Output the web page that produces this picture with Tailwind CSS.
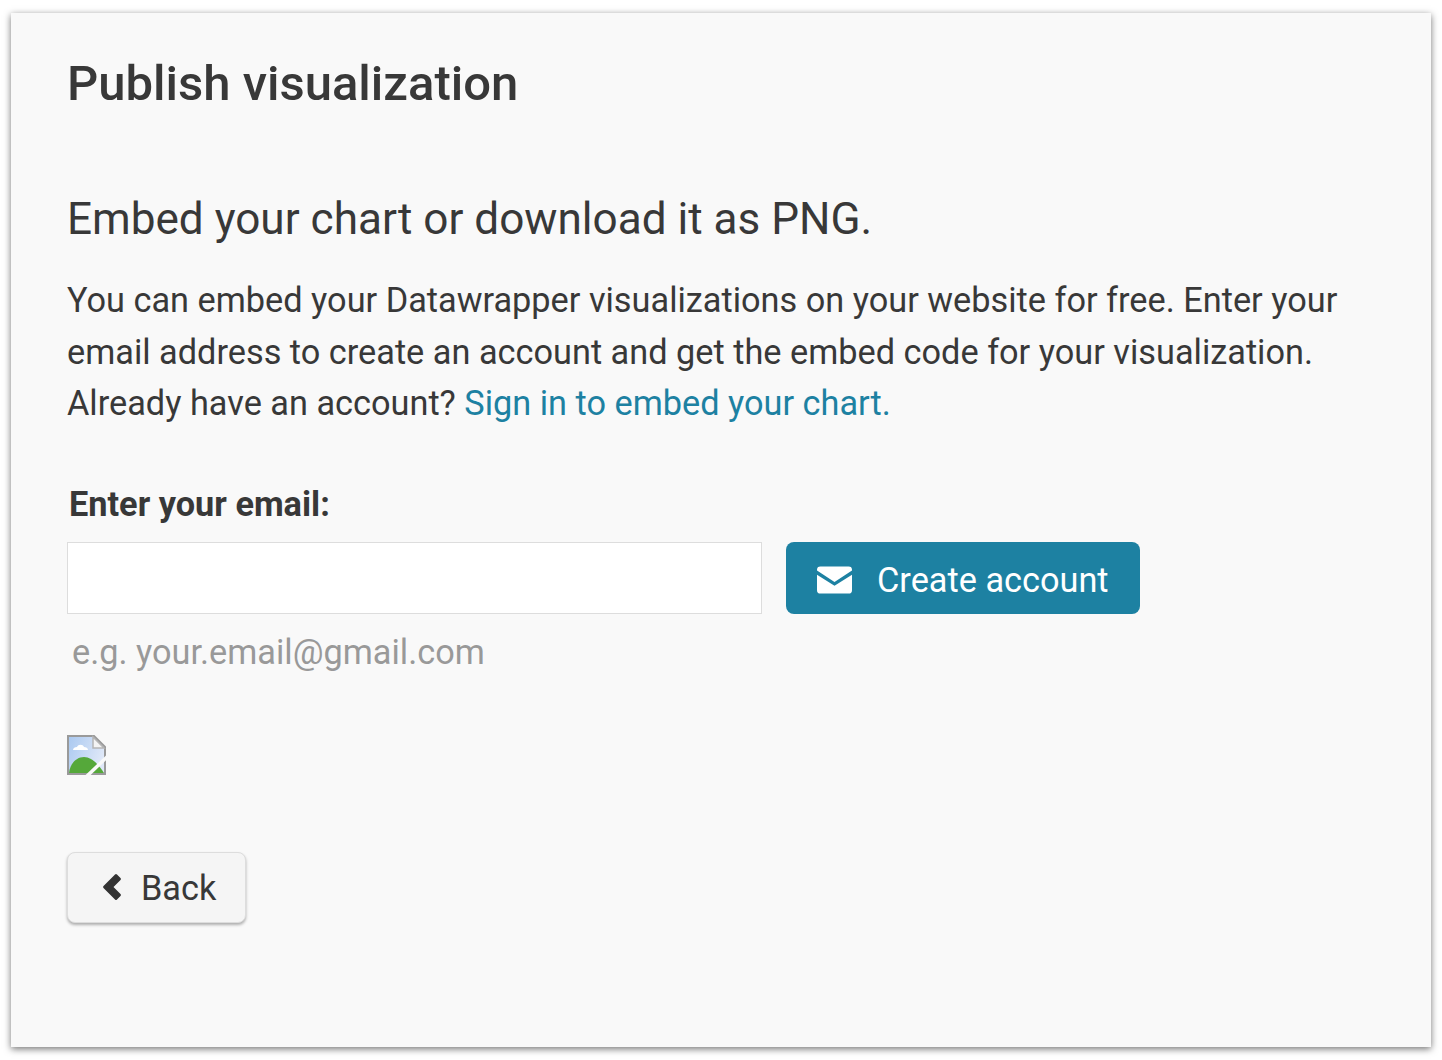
<!DOCTYPE html>
<html lang="en">
<head>
  <meta charset="UTF-8">
  <title>Publish visualization</title>
  <script src="https://cdn.jsdelivr.net/npm/@tailwindcss/browser@4"></script>
</head>
<body class="bg-white h-[1060px] overflow-hidden font-['Roboto',sans-serif] text-[#383838]">
  <div class="ml-[11px] mt-[13px] w-[1420px] h-[1034px] bg-[#f9f9f9] shadow-[0_2px_7px_rgba(0,0,0,0.55)] pl-[56px] pt-[43px]">
    <h1 class="text-[49px] leading-[56px] font-medium">Publish visualization</h1>

    <h2 class="mt-[79px] text-[44.1px] leading-[56px] font-normal">Embed your chart or download it as PNG.</h2>

    <p class="mt-[28px] w-[1320px] text-[34.3px] leading-[51.5px]">
      You can embed your Datawrapper visualizations on your website for free. Enter your email address to create an account and get the embed code for your visualization. Already have an account?
      <a href="#" class="text-[#1d81a2]">Sign in to embed your chart.</a>
    </p>

    <label class="block mt-[50px] ml-[2px] text-[34.3px] leading-[48px] font-bold">Enter your email:</label>
    <div class="mt-[14px] flex gap-[24px]">
      <input type="text" class="w-[695px] h-[72px] bg-white border border-[#ddd]">
      <button class="w-[354px] h-[72px] rounded-[8px] bg-[#1d81a2] text-white text-[34.3px] flex items-center pl-[31px] gap-[25px]">
        <svg class="w-[35px] h-[28px] mt-[4px]" viewBox="0 0 36 28" fill="#fff"><path d="M3.5 0h29A3.5 3.5 0 0 1 36 3.5v.8L18 16 0 4.300v-.8A3.500 3.500 0 0 1 3.500 0Z"/><path d="M0 8.500 18 20 36 8.500v16a3.500 3.500 0 0 1-3.500 3.500h-29A3.500 3.500 0 0 1 0 24.500Z"/></svg>
        <span class="pt-[7px]">Create account</span>
      </button>
    </div>
    <p class="mt-[14px] ml-[5px] text-[34.3px] leading-[48px] text-[#999]">e.g. your.email@gmail.com</p>

    <svg class="mt-[59px] w-[39px] h-[40px] block" viewBox="0 0 39 40">
      <defs><linearGradient id="sky" x1="0" y1="0" x2="1" y2="0.4"><stop offset="0" stop-color="#a9c8f0"/><stop offset="1" stop-color="#dfe8f8"/></linearGradient></defs>
      <path d="M1 1h26l11 11v27H1Z" fill="url(#sky)" stroke="#9a9a9a" stroke-width="2"/>
      <path d="M26 2v11h11Z" fill="#f4f4f4" stroke="#b5b5b5" stroke-width="1.500"/>
      <path d="M6 15c0-2 2-3 4-3 1-3 6-3 7 0 2 0 4 1 4 3Z" fill="#fff"/>
      <path d="M2 38C3 29 9 22 17 22 25 22 32 30 37 38Z" fill="#55a83a"/>
      <path d="M19 42 41 21" stroke="#f9f9f9" stroke-width="3.500"/>
    </svg>

    <button class="mt-[77px] w-[179px] h-[71px] rounded-[8px] bg-[#f5f5f5] border border-[#ddd] shadow-[0_2px_3px_rgba(0,0,0,0.3)] text-[34.3px] flex items-center pl-[34px] gap-[19px]">
      <svg class="w-[20px] h-[28px]" viewBox="0 0 20 28" fill="#333"><path d="M13 1.500Q14 .5 15 1.500L18.500 5Q19.500 6 18.500 7L11.500 14 18.500 21Q19.500 22 18.500 23L15 26.500Q14 27.500 13 26.500L1.500 15Q.5 14 1.500 13Z"/></svg>
      <span class="pt-[4px]">Back</span>
    </button>
  </div>
</body>
</html>
